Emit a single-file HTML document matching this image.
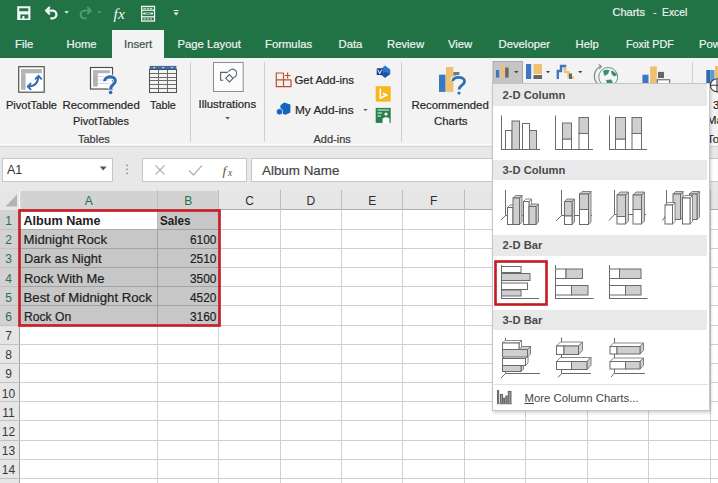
<!DOCTYPE html>
<html><head><meta charset="utf-8">
<style>
*{margin:0;padding:0;box-sizing:border-box}
html,body{width:718px;height:483px;overflow:hidden}
body{position:relative;background:#fff;font-family:"Liberation Sans",sans-serif;color:#333}
.a{position:absolute;white-space:nowrap}
.rt,.tab,.gl{-webkit-text-stroke:0.2px currentColor}
.tab{position:absolute;top:37px;font-size:11.3px;color:#eef3ef;line-height:14px}
.rt{position:absolute;font-size:11.4px;color:#262626;line-height:14px;white-space:nowrap}
.gl{position:absolute;font-size:11px;color:#3a3a3a;line-height:14px;white-space:nowrap}
.sep{position:absolute;top:62px;width:1px;height:80px;background:#cfcfcf}
</style></head><body>

<!-- title bar + tabs -->
<div class="a" style="left:0;top:0;width:718px;height:58px;background:#217346"></div>
<div class="a" style="left:112px;top:30px;width:52px;height:29px;background:#f3f3f3"></div>
<div class="a" style="left:612.5px;top:5px;font-size:11px;color:#eef3ef;line-height:14px;-webkit-text-stroke:0.2px #eef3ef">Charts</div><div class="a" style="left:653px;top:5px;font-size:11px;color:#eef3ef;line-height:14px">-</div><div class="a" style="left:662px;top:5px;font-size:11px;color:#eef3ef;line-height:14px;-webkit-text-stroke:0.2px #eef3ef;transform:scaleX(0.94);transform-origin:0 0">Excel</div>
<div class="tab" style="left:15px">File</div>
<div class="tab" style="left:66.5px">Home</div>
<div class="tab" style="left:124px;color:#3d5246">Insert</div>
<div class="tab" style="left:177.5px">Page Layout</div>
<div class="tab" style="left:265px">Formulas</div>
<div class="tab" style="left:338.5px">Data</div>
<div class="tab" style="left:387px">Review</div>
<div class="tab" style="left:448px">View</div>
<div class="tab" style="left:498.5px">Developer</div>
<div class="tab" style="left:575.5px">Help</div>
<div class="tab" style="left:625.5px;transform:scaleX(0.95);transform-origin:0 0">Foxit PDF</div>
<div class="tab" style="left:699px">Power</div>

<!-- ribbon -->
<div class="a" style="left:0;top:58px;width:718px;height:89px;background:#f3f3f3"></div>
<div class="a" style="left:0;top:143.5px;width:718px;height:1px;background:#fafafa"></div><div class="a" style="left:0;top:146px;width:718px;height:1.5px;background:#d4d4d4"></div>
<div class="a" style="left:0;top:147px;width:718px;height:44px;background:#e8e8e8"></div>
<div class="sep" style="left:190px"></div>
<div class="sep" style="left:264px"></div>
<div class="sep" style="left:401px"></div>
<div class="sep" style="left:692px;height:22px"></div>

<div class="rt" style="left:6px;top:98px;transform:scaleX(0.97);transform-origin:0 0">PivotTable</div>
<div class="rt" style="left:62.5px;top:98px">Recommended</div>
<div class="rt" style="left:73px;top:114px;transform:scaleX(0.96);transform-origin:0 0">PivotTables</div>
<div class="rt" style="left:150px;top:98px;transform:scaleX(0.95);transform-origin:0 0">Table</div>
<div class="gl" style="left:78px;top:132px">Tables</div>
<div class="rt" style="left:198.5px;top:97px">Illustrations</div>
<div class="rt" style="left:294.5px;top:73px">Get Add-ins</div>
<div class="rt" style="left:294.5px;top:103px;transform:scaleX(1.04);transform-origin:0 0">My Add-ins</div>
<div class="gl" style="left:313.5px;top:132px">Add-ins</div>
<div class="rt" style="left:411.5px;top:98px">Recommended</div>
<div class="rt" style="left:434px;top:114px">Charts</div>
<div class="rt" style="left:713px;top:98px">3</div>
<div class="rt" style="left:707px;top:113px">Map</div>
<div class="rt" style="left:707px;top:132px">Tour</div>

<!-- RIBBON -->
<svg class="a" style="left:0;top:0" width="718" height="130" viewBox="0 0 718 130">
<rect x="493" y="61.5" width="29.5" height="22" fill="#c5c5c5" stroke="#a9a9a9" stroke-width="1"/>
<g fill="#f4f8f5"><path d="M17.2 6.2 H30.4 V20 H17.2 Z M19.3 8.3 V11.3 H28.3 V8.3 Z M20.3 14.5 V18.4 H22.4 V16 H24.4 V18.4 H28.3 V14.5 Z" fill-rule="evenodd"/></g>
<g fill="none" stroke="#f4f8f5" stroke-width="2.2" stroke-linecap="round" stroke-linejoin="round"><path d="M46.2 10.6 H52.5 A3.9 3.9 0 0 1 52.5 18.4 H51.2"/><path d="M49.2 7.6 L46.2 10.6 L49.2 13.6"/></g>
<path d="M64.3 11.3 H68.9 L66.6 13.6 Z" fill="#f4f8f5"/>
<g fill="none" stroke="#5aa27a" stroke-width="1.9" stroke-linecap="round" stroke-linejoin="round" opacity="0.9"><path d="M90.8 10.6 H84.5 A3.9 3.9 0 0 0 84.5 18.4 H85.8"/><path d="M87.8 7.6 L90.8 10.6 L87.8 13.6"/></g>
<path d="M97.3 11.3 H101.9 L99.6 13.6 Z" fill="#4f9a71"/>
<text x="113.6" y="18.6" font-family="Liberation Serif" font-style="italic" font-size="15.5" fill="#f4f8f5">fx</text>
<g fill="none" stroke="#f4f8f5" stroke-width="1.3"><rect x="141.7" y="6.4" width="12.8" height="14.6"/><line x1="141.7" y1="10.2" x2="154.5" y2="10.2"/><line x1="141.7" y1="16.8" x2="154.5" y2="16.8"/></g>
<path d="M143.5 8.3 H152.8 M143.5 18.9 H152.8" stroke="#f4f8f5" stroke-width="1" stroke-dasharray="2.2 1"/>
<path d="M143.2 13.5 H153" stroke="#f4f8f5" stroke-width="1.8"/><path d="M145.5 13.5 H150.7" stroke="#217346" stroke-width="0.7"/>
<rect x="173.8" y="10" width="4.6" height="1" fill="#f4f8f5"/><path d="M173.6 12.4 H178.6 L176.1 15.4 Z" fill="#f4f8f5"/>
<rect x="18.7" y="66.7" width="25.5" height="25.5" fill="#fff" stroke="#505050" stroke-width="1.2"/>
<rect x="21" y="69" width="20.8" height="4.3" fill="#b3b3b3"/><rect x="21" y="73.3" width="4.6" height="16.5" fill="#b3b3b3"/>
<g fill="none" stroke="#2f6db5" stroke-width="1.9" stroke-linecap="round" stroke-linejoin="round"><path d="M28.2 86.5 Q37.8 86.5 38.5 76.4"/><path d="M30.6 83.6 L27.8 86.5 L30.6 89.3"/><path d="M35.6 78.8 L38.5 75.8 L41.3 78.8"/></g>
<rect x="90.5" y="67.5" width="22" height="21.5" fill="#fff" stroke="#505050" stroke-width="1.2"/>
<rect x="93" y="70.2" width="17" height="3" fill="#b3b3b3"/><rect x="93" y="73.2" width="4.8" height="13.4" fill="#b3b3b3"/>
<g stroke="#d0d0d0" stroke-width="0.8"><line x1="98" y1="76.5" x2="110" y2="76.5"/><line x1="98" y1="80" x2="110" y2="80"/><line x1="98" y1="83.5" x2="110" y2="83.5"/></g>
<path d="M104.6 81.3 C104.6 75.6 115.4 75.4 115.4 80.8 C115.4 84.6 110.6 84.4 110.6 89" fill="none" stroke="#fff" stroke-width="5"/>
<path d="M104.6 81.3 C104.6 75.6 115.4 75.4 115.4 80.8 C115.4 84.6 110.6 84.4 110.6 89" fill="none" stroke="#2f6db5" stroke-width="3.1"/>
<circle cx="110.6" cy="92.4" r="1.8" fill="#2f6db5"/>
<rect x="149.6" y="65.9" width="26.8" height="3.9" fill="#3f6fa6"/>
<g fill="#fff"><path d="M152.8 67.2 H155.6 L154.2 68.6Z"/><path d="M161.8 67.2 H164.6 L163.2 68.6Z"/><path d="M170.6 67.2 H173.4 L172 68.6Z"/></g>
<g stroke="#6a6a6a" stroke-width="1" fill="none"><line x1="158.5" y1="70" x2="158.5" y2="92.5"/><line x1="167.5" y1="70" x2="167.5" y2="92.5"/><line x1="150" y1="73.5" x2="176" y2="73.5"/><line x1="150" y1="77.5" x2="176" y2="77.5"/><line x1="150" y1="80.5" x2="176" y2="80.5"/><line x1="150" y1="84.5" x2="176" y2="84.5"/><line x1="150" y1="88.5" x2="176" y2="88.5"/></g>
<rect x="149.5" y="69.5" width="27" height="23" fill="none" stroke="#505050" stroke-width="1"/>
<rect x="213.5" y="62.5" width="29.7" height="29" fill="#fcfcfc" stroke="#8c8c8c" stroke-width="1"/>
<g fill="none" stroke="#55606b" stroke-width="1.1"><path d="M227.8 72.4 H220.6 V80.2 H223.2"/><path d="M228.5 71.8 A4.3 4.3 0 1 1 233.6 77.6"/><path d="M229.4 74.6 L233.1 78.3 L229.4 82 L225.7 78.3 Z"/></g>
<path d="M225.2 117 H230 L227.6 119.4Z" fill="#555"/>
<g fill="none" stroke="#c0502a" stroke-width="1.2"><path d="M283.5 73 H276.3 V86.6 H291 V79.8 M276.3 79.8 H291 M283.5 73 V86.6"/><path d="M287.6 72.6 V78.4 M284.7 75.5 H290.5"/></g>
<path d="M284.2 102.6 L290.4 104.6 L290.4 112.4 L285.6 114.8 L280.4 113 L280.4 105.2 Z" fill="#1565c0"/>
<circle cx="279.5" cy="111.8" r="3.2" fill="#1565c0" stroke="#f3f3f3" stroke-width="0.8"/>
<path d="M363.2 108.9 H367.6 L365.4 111.1Z" fill="#555"/>
<path d="M385 65.4 L390.3 69.5 L390.3 74 L385 77.8 L380.5 74 L380.5 69.5 Z" fill="#2f78d0"/>
<path d="M385 71.5 L390.3 74 L385 77.8 L381.5 75 Z" fill="#1d56a8"/>
<rect x="376.7" y="68.3" width="6" height="6.8" rx="0.6" fill="#1b3f86"/>
<path d="M377.8 69.7 L379.7 73.8 L381.6 69.7" fill="none" stroke="#fff" stroke-width="1"/>
<rect x="375.7" y="86.2" width="15" height="15.4" fill="#f6b71c"/>
<path d="M380.3 88.6 V98.2 L386.8 95 L383 93.4" fill="none" stroke="#fff" stroke-width="1.7" stroke-linejoin="round"/>
<rect x="375.7" y="107.9" width="15" height="15" fill="#2a8050"/>
<g stroke="#fff" stroke-width="0.9"><line x1="377.5" y1="110" x2="389" y2="110"/><line x1="377.5" y1="113" x2="382" y2="113"/><line x1="377.5" y1="116" x2="381" y2="116"/></g>
<circle cx="386" cy="114" r="1.6" fill="#fff"/><path d="M382.6 122.9 V118.6 Q386 116 389.4 118.6 V122.9Z" fill="#fff"/>
<rect x="439" y="74.7" width="6.5" height="17.2" fill="#3b78c0"/>
<rect x="446" y="67" width="7.4" height="24.9" fill="#f0c070"/>
<rect x="453.4" y="72" width="6" height="6" fill="#777"/>
<path d="M452.8 81 C452.8 76.2 464.6 76 464.6 81.5 C464.6 85 459 85.4 459 89.6" fill="none" stroke="#f3f3f3" stroke-width="5"/>
<path d="M452.8 81 C452.8 76.2 464.6 76 464.6 81.5 C464.6 85 459 85.4 459 89.6" fill="none" stroke="#2f6db5" stroke-width="2.8"/>
<circle cx="459" cy="93" r="1.6" fill="#2f6db5"/>
<rect x="496" y="70" width="3.2" height="7.6" fill="#3b78c0"/><rect x="501" y="65" width="3.4" height="12.6" fill="#f0c070"/><rect x="505.2" y="67.5" width="3.4" height="10.1" fill="#666"/>
<path d="M514 71 H518.5 L516.25 73.2Z" fill="#444"/>
<rect x="526" y="64" width="5.2" height="15" fill="#3b78c0"/><rect x="533.5" y="64" width="8.5" height="10" fill="#f0c070"/><rect x="533.5" y="75" width="8.5" height="4" fill="#666"/>
<path d="M546 71 H550 L548 73.2Z" fill="#444"/>
<path d="M557.8 79 V71 H561 V66 H565 V69.8" fill="none" stroke="#3b78c0" stroke-width="2.4"/><path d="M565 67 V72 H568.5 V77 H572.5 V79" fill="none" stroke="#f0c070" stroke-width="2.2"/><rect x="569" y="73.5" width="3" height="5.5" fill="#666"/>
<path d="M578 71 H582.4 L580.2 73.2Z" fill="#444"/>
<path d="M600.5 66.5 A10.5 10.5 0 0 0 598 84" fill="none" stroke="#888" stroke-width="1.3"/><path d="M598.8 64.5 L601.4 66.4 L599.4 68.8" fill="none" stroke="#888" stroke-width="1.1"/>
<circle cx="608.2" cy="77" r="9.5" fill="#f5f5f5" stroke="#5a9a7c" stroke-width="1"/>
<path d="M603 71 Q606 69 609.5 70.5 L608 74 L604.5 76 Z M611 70.5 Q615.5 71.5 617.2 75 L614 76.5 L611.5 74 Z M606 80 L611.5 79.5 L613 83.5 L607 84 Z" fill="#3f8f6b"/>
<rect x="642.4" y="74.7" width="6.1" height="9" fill="#3b78c0"/><rect x="650.2" y="66.4" width="6.7" height="17.3" fill="#f0c070"/><rect x="658" y="71.9" width="6" height="6.1" fill="#666"/>
<rect x="657.3" y="79.8" width="12.4" height="4" fill="#fff" stroke="#555" stroke-width="1"/>
<rect x="715" y="66" width="3" height="12" fill="#f0c070"/>
<rect x="706.3" y="70" width="4" height="13" fill="#2f6aa8"/><rect x="710.3" y="70" width="4.2" height="13" fill="#5b9bd5"/>
<circle cx="717" cy="85.3" r="6.6" fill="#fafafa" stroke="#3c3c3c" stroke-width="1.1"/>
<path d="M710.4 85.3 H718 M717 78.7 V92" stroke="#3c3c3c" stroke-width="1.1"/>
</svg>
<!-- /RIBBON -->
<!-- formula bar -->
<div class="a" style="left:2px;top:157.5px;width:110.5px;height:24px;background:#fff;border:1px solid #c6c6c6"></div>
<div class="a" style="left:7px;top:163px;font-size:12.5px;color:#333;line-height:14px">A1</div>
<div class="a" style="left:142px;top:157.5px;width:104.5px;height:24px;background:#fff;border:1px solid #c6c6c6"></div>
<svg class="a" style="left:0;top:150px" width="260" height="40" viewBox="0 150 260 40">
<path d="M99.8 166.6 H106.6 L103.2 170.4Z" fill="#555"/>
<g fill="#8a8a8a"><rect x="126.3" y="164.6" width="1.5" height="1.5"/><rect x="126.3" y="168.6" width="1.5" height="1.5"/><rect x="126.3" y="172.6" width="1.5" height="1.5"/></g>
<path d="M155.5 165.5 L164.5 174.5 M164.5 165.5 L155.5 174.5" stroke="#b5b5b5" stroke-width="1.3"/>
<path d="M189 170.5 L193.5 175 L202 165.5" fill="none" stroke="#b5b5b5" stroke-width="1.3"/>
<text x="222.5" y="175" font-family="Liberation Serif" font-style="italic" font-size="13.5" fill="#555">f</text>
<text x="228" y="176" font-family="Liberation Serif" font-style="italic" font-size="9.5" fill="#555">x</text>
</svg>
<div class="a" style="left:250.5px;top:157.5px;width:470px;height:24px;background:#fff;border:1px solid #c6c6c6"></div>
<div class="a" style="left:262px;top:162.5px;font-size:13.4px;color:#444;line-height:15px;-webkit-text-stroke:0.2px #444">Album Name</div>

<!-- SHEET -->
<div class="a" style="left:0;top:191px;width:718px;height:18.5px;background:#e6e6e6"></div>
<div class="a" style="left:20px;top:191px;width:199px;height:18.5px;background:#d2d2d2"></div>
<div class="a" style="left:0;top:209.5px;width:20px;height:273.5px;background:#e6e6e6"></div>
<div class="a" style="left:0;top:210.0px;width:20px;height:115.01999999999998px;background:#d2d2d2"></div>
<svg class="a" style="left:0;top:0" width="718" height="483" viewBox="0 0 718 483">
<path d="M17 194.5 L17 206.5 L5.5 206.5 Z" fill="#b4b4b4"/>
<line x1="157.5" y1="190" x2="157.5" y2="209.5" stroke="#bdbdbd" stroke-width="1"/>
<line x1="218.5" y1="190" x2="218.5" y2="209.5" stroke="#bdbdbd" stroke-width="1"/>
<line x1="280.5" y1="190" x2="280.5" y2="209.5" stroke="#bdbdbd" stroke-width="1"/>
<line x1="341.5" y1="190" x2="341.5" y2="209.5" stroke="#bdbdbd" stroke-width="1"/>
<line x1="402.5" y1="190" x2="402.5" y2="209.5" stroke="#bdbdbd" stroke-width="1"/>
<line x1="464.5" y1="190" x2="464.5" y2="209.5" stroke="#bdbdbd" stroke-width="1"/>
<line x1="525.5" y1="190" x2="525.5" y2="209.5" stroke="#bdbdbd" stroke-width="1"/>
<line x1="587.5" y1="190" x2="587.5" y2="209.5" stroke="#bdbdbd" stroke-width="1"/>
<line x1="648.5" y1="190" x2="648.5" y2="209.5" stroke="#bdbdbd" stroke-width="1"/>
<line x1="710.5" y1="190" x2="710.5" y2="209.5" stroke="#bdbdbd" stroke-width="1"/>
<line x1="20" y1="209.5" x2="718" y2="209.5" stroke="#ababab" stroke-width="1"/>
<line x1="19.5" y1="191" x2="19.5" y2="209.5" stroke="#f4f4f4" stroke-width="1.5"/>
<line x1="19.5" y1="209.5" x2="19.5" y2="483" stroke="#a3a3a3" stroke-width="1"/>
<line x1="157.5" y1="209.5" x2="157.5" y2="483" stroke="#d0d0d0" stroke-width="1"/>
<line x1="218.5" y1="209.5" x2="218.5" y2="483" stroke="#d0d0d0" stroke-width="1"/>
<line x1="280.5" y1="209.5" x2="280.5" y2="483" stroke="#d0d0d0" stroke-width="1"/>
<line x1="341.5" y1="209.5" x2="341.5" y2="483" stroke="#d0d0d0" stroke-width="1"/>
<line x1="402.5" y1="209.5" x2="402.5" y2="483" stroke="#d0d0d0" stroke-width="1"/>
<line x1="464.5" y1="209.5" x2="464.5" y2="483" stroke="#d0d0d0" stroke-width="1"/>
<line x1="525.5" y1="209.5" x2="525.5" y2="483" stroke="#d0d0d0" stroke-width="1"/>
<line x1="587.5" y1="209.5" x2="587.5" y2="483" stroke="#d0d0d0" stroke-width="1"/>
<line x1="648.5" y1="209.5" x2="648.5" y2="483" stroke="#d0d0d0" stroke-width="1"/>
<line x1="710.5" y1="209.5" x2="710.5" y2="483" stroke="#d0d0d0" stroke-width="1"/>
<line x1="20" y1="229.5" x2="718" y2="229.5" stroke="#d0d0d0" stroke-width="1"/>
<line x1="0" y1="229.5" x2="20" y2="229.5" stroke="#c2c2c2" stroke-width="1"/>
<line x1="20" y1="248.5" x2="718" y2="248.5" stroke="#d0d0d0" stroke-width="1"/>
<line x1="0" y1="248.5" x2="20" y2="248.5" stroke="#c2c2c2" stroke-width="1"/>
<line x1="20" y1="267.5" x2="718" y2="267.5" stroke="#d0d0d0" stroke-width="1"/>
<line x1="0" y1="267.5" x2="20" y2="267.5" stroke="#c2c2c2" stroke-width="1"/>
<line x1="20" y1="286.5" x2="718" y2="286.5" stroke="#d0d0d0" stroke-width="1"/>
<line x1="0" y1="286.5" x2="20" y2="286.5" stroke="#c2c2c2" stroke-width="1"/>
<line x1="20" y1="305.5" x2="718" y2="305.5" stroke="#d0d0d0" stroke-width="1"/>
<line x1="0" y1="305.5" x2="20" y2="305.5" stroke="#c2c2c2" stroke-width="1"/>
<line x1="20" y1="325.5" x2="718" y2="325.5" stroke="#d0d0d0" stroke-width="1"/>
<line x1="0" y1="325.5" x2="20" y2="325.5" stroke="#c2c2c2" stroke-width="1"/>
<line x1="20" y1="344.5" x2="718" y2="344.5" stroke="#d0d0d0" stroke-width="1"/>
<line x1="0" y1="344.5" x2="20" y2="344.5" stroke="#c2c2c2" stroke-width="1"/>
<line x1="20" y1="363.5" x2="718" y2="363.5" stroke="#d0d0d0" stroke-width="1"/>
<line x1="0" y1="363.5" x2="20" y2="363.5" stroke="#c2c2c2" stroke-width="1"/>
<line x1="20" y1="382.5" x2="718" y2="382.5" stroke="#d0d0d0" stroke-width="1"/>
<line x1="0" y1="382.5" x2="20" y2="382.5" stroke="#c2c2c2" stroke-width="1"/>
<line x1="20" y1="401.5" x2="718" y2="401.5" stroke="#d0d0d0" stroke-width="1"/>
<line x1="0" y1="401.5" x2="20" y2="401.5" stroke="#c2c2c2" stroke-width="1"/>
<line x1="20" y1="420.5" x2="718" y2="420.5" stroke="#d0d0d0" stroke-width="1"/>
<line x1="0" y1="420.5" x2="20" y2="420.5" stroke="#c2c2c2" stroke-width="1"/>
<line x1="20" y1="440.5" x2="718" y2="440.5" stroke="#d0d0d0" stroke-width="1"/>
<line x1="0" y1="440.5" x2="20" y2="440.5" stroke="#c2c2c2" stroke-width="1"/>
<line x1="20" y1="459.5" x2="718" y2="459.5" stroke="#d0d0d0" stroke-width="1"/>
<line x1="0" y1="459.5" x2="20" y2="459.5" stroke="#c2c2c2" stroke-width="1"/>
<line x1="20" y1="478.5" x2="718" y2="478.5" stroke="#d0d0d0" stroke-width="1"/>
<line x1="0" y1="478.5" x2="20" y2="478.5" stroke="#c2c2c2" stroke-width="1"/>
<path d="M20 229.17000000000002 H157.5 V210.0 H219 V325.02 H20 Z" fill="#000" fill-opacity="0.22"/>
<rect x="19.5" y="210.5" width="200" height="115" fill="none" stroke="#c8202a" stroke-width="2.7"/>
</svg>
<div class="a" style="left:68.75px;width:40px;text-align:center;top:193.5px;font-size:12px;line-height:15px;color:#217346">A</div>
<div class="a" style="left:168.25px;width:40px;text-align:center;top:193.5px;font-size:12px;line-height:15px;color:#217346">B</div>
<div class="a" style="left:229.7px;width:40px;text-align:center;top:193.5px;font-size:12px;line-height:15px;color:#2e2e2e">C</div>
<div class="a" style="left:290.95px;width:40px;text-align:center;top:193.5px;font-size:12px;line-height:15px;color:#2e2e2e">D</div>
<div class="a" style="left:352.15px;width:40px;text-align:center;top:193.5px;font-size:12px;line-height:15px;color:#2e2e2e">E</div>
<div class="a" style="left:413.6px;width:40px;text-align:center;top:193.5px;font-size:12px;line-height:15px;color:#2e2e2e">F</div>
<div class="a" style="left:-1.5px;width:20px;text-align:center;top:214.0px;font-size:12px;line-height:15px;color:#2a7049">1</div>
<div class="a" style="left:-1.5px;width:20px;text-align:center;top:233.17000000000002px;font-size:12px;line-height:15px;color:#2a7049">2</div>
<div class="a" style="left:-1.5px;width:20px;text-align:center;top:252.34px;font-size:12px;line-height:15px;color:#2a7049">3</div>
<div class="a" style="left:-1.5px;width:20px;text-align:center;top:271.51px;font-size:12px;line-height:15px;color:#2a7049">4</div>
<div class="a" style="left:-1.5px;width:20px;text-align:center;top:290.68px;font-size:12px;line-height:15px;color:#2a7049">5</div>
<div class="a" style="left:-1.5px;width:20px;text-align:center;top:309.85px;font-size:12px;line-height:15px;color:#2a7049">6</div>
<div class="a" style="left:-1.5px;width:20px;text-align:center;top:329.02px;font-size:12px;line-height:15px;color:#383838">7</div>
<div class="a" style="left:-1.5px;width:20px;text-align:center;top:348.19px;font-size:12px;line-height:15px;color:#383838">8</div>
<div class="a" style="left:-1.5px;width:20px;text-align:center;top:367.36px;font-size:12px;line-height:15px;color:#383838">9</div>
<div class="a" style="left:-1.5px;width:20px;text-align:center;top:386.53000000000003px;font-size:12px;line-height:15px;color:#383838">10</div>
<div class="a" style="left:-1.5px;width:20px;text-align:center;top:405.70000000000005px;font-size:12px;line-height:15px;color:#383838">11</div>
<div class="a" style="left:-1.5px;width:20px;text-align:center;top:424.87px;font-size:12px;line-height:15px;color:#383838">12</div>
<div class="a" style="left:-1.5px;width:20px;text-align:center;top:444.04px;font-size:12px;line-height:15px;color:#383838">13</div>
<div class="a" style="left:-1.5px;width:20px;text-align:center;top:463.21000000000004px;font-size:12px;line-height:15px;color:#383838">14</div>
<div class="a" style="left:23.5px;top:213.0px;font-size:12.6px;font-weight:bold;line-height:16px;color:#1e1e1e;-webkit-text-stroke:0px #1e1e1e;transform:scaleX(1.0);transform-origin:0 0">Album Name</div>
<div class="a" style="left:159.5px;top:213.0px;font-size:12.6px;font-weight:bold;line-height:16px;color:#1e1e1e;-webkit-text-stroke:0px #1e1e1e;transform:scaleX(0.93);transform-origin:0 0">Sales</div>
<div class="a" style="left:23.5px;top:232.17000000000002px;font-size:13.2px;font-weight:normal;line-height:16px;color:#1e1e1e;-webkit-text-stroke:0.2px #1e1e1e;transform:scaleX(1.0);transform-origin:0 0">Midnight Rock</div>
<div class="a" style="right:501.5px;top:232.17000000000002px;font-size:13.2px;font-weight:normal;line-height:16px;color:#1e1e1e;-webkit-text-stroke:0.2px #1e1e1e;transform:scaleX(0.9);transform-origin:100% 0">6100</div>
<div class="a" style="left:23.5px;top:251.34px;font-size:13.2px;font-weight:normal;line-height:16px;color:#1e1e1e;-webkit-text-stroke:0.2px #1e1e1e;transform:scaleX(0.97);transform-origin:0 0">Dark as Night</div>
<div class="a" style="right:501.5px;top:251.34px;font-size:13.2px;font-weight:normal;line-height:16px;color:#1e1e1e;-webkit-text-stroke:0.2px #1e1e1e;transform:scaleX(0.9);transform-origin:100% 0">2510</div>
<div class="a" style="left:23.5px;top:270.51px;font-size:13.2px;font-weight:normal;line-height:16px;color:#1e1e1e;-webkit-text-stroke:0.2px #1e1e1e;transform:scaleX(0.98);transform-origin:0 0">Rock With Me</div>
<div class="a" style="right:501.5px;top:270.51px;font-size:13.2px;font-weight:normal;line-height:16px;color:#1e1e1e;-webkit-text-stroke:0.2px #1e1e1e;transform:scaleX(0.9);transform-origin:100% 0">3500</div>
<div class="a" style="left:23.5px;top:289.68px;font-size:13.2px;font-weight:normal;line-height:16px;color:#1e1e1e;-webkit-text-stroke:0.2px #1e1e1e;transform:scaleX(1.0);transform-origin:0 0">Best of Midnight Rock</div>
<div class="a" style="right:501.5px;top:289.68px;font-size:13.2px;font-weight:normal;line-height:16px;color:#1e1e1e;-webkit-text-stroke:0.2px #1e1e1e;transform:scaleX(0.9);transform-origin:100% 0">4520</div>
<div class="a" style="left:23.5px;top:308.85px;font-size:13.2px;font-weight:normal;line-height:16px;color:#1e1e1e;-webkit-text-stroke:0.2px #1e1e1e;transform:scaleX(0.92);transform-origin:0 0">Rock On</div>
<div class="a" style="right:501.5px;top:308.85px;font-size:13.2px;font-weight:normal;line-height:16px;color:#1e1e1e;-webkit-text-stroke:0.2px #1e1e1e;transform:scaleX(0.9);transform-origin:100% 0">3160</div>
<!-- /SHEET -->

<!-- PANEL -->
<div class="a" style="left:492px;top:83px;width:218px;height:328px;background:#fff;border:1px solid #c6c6c6;box-shadow:1px 2px 3px rgba(0,0,0,0.18)"></div>
<div class="a" style="left:493px;top:84px;width:214px;height:21.5px;background:#e9e9e9"></div>
<div class="a" style="left:502.5px;top:88.0px;font-size:11.2px;font-weight:bold;color:#4a4a4a;line-height:15px">2-D Column</div>
<div class="a" style="left:493px;top:159.5px;width:214px;height:20.5px;background:#e9e9e9"></div>
<div class="a" style="left:502.5px;top:163.0px;font-size:11.2px;font-weight:bold;color:#4a4a4a;line-height:15px">3-D Column</div>
<div class="a" style="left:493px;top:234.5px;width:214px;height:21.0px;background:#e9e9e9"></div>
<div class="a" style="left:502.5px;top:238.25px;font-size:11.2px;font-weight:bold;color:#4a4a4a;line-height:15px">2-D Bar</div>
<div class="a" style="left:493px;top:310px;width:214px;height:20px;background:#e9e9e9"></div>
<div class="a" style="left:502.5px;top:313.25px;font-size:11.2px;font-weight:bold;color:#4a4a4a;line-height:15px">3-D Bar</div>
<div class="a" style="left:494px;top:384px;width:214px;height:1px;background:#e1e1e1"></div>
<div class="a" style="left:524.5px;top:391px;font-size:11.35px;color:#444;line-height:15px"><span style="text-decoration:underline">M</span>ore Column Charts...</div>
<svg class="a" style="left:0;top:0" width="718" height="483" viewBox="0 0 718 483">
<rect x="505.5" y="130.5" width="6.5" height="19.0" fill="#ffffff" stroke="#6b6b6b" stroke-width="1"/>
<rect x="512" y="121" width="7.5" height="28.5" fill="#cfcfcf" stroke="#6b6b6b" stroke-width="1"/>
<rect x="522.5" y="123.5" width="7.0" height="26.0" fill="#ffffff" stroke="#6b6b6b" stroke-width="1"/>
<rect x="529.5" y="130.5" width="7.0" height="19.0" fill="#cfcfcf" stroke="#6b6b6b" stroke-width="1"/>
<line x1="501.5" y1="115.5" x2="501.5" y2="150" stroke="#6b6b6b" stroke-width="1"/>
<line x1="501.5" y1="149.5" x2="540" y2="149.5" stroke="#6b6b6b" stroke-width="1"/>
<rect x="562.5" y="139" width="9.0" height="10.5" fill="#ffffff" stroke="#6b6b6b" stroke-width="1"/>
<rect x="562.5" y="123" width="9.0" height="16" fill="#cfcfcf" stroke="#6b6b6b" stroke-width="1"/>
<rect x="579" y="133.5" width="9.5" height="16.0" fill="#ffffff" stroke="#6b6b6b" stroke-width="1"/>
<rect x="579" y="117.5" width="9.5" height="16.0" fill="#cfcfcf" stroke="#6b6b6b" stroke-width="1"/>
<line x1="555.5" y1="115.5" x2="555.5" y2="150" stroke="#6b6b6b" stroke-width="1"/>
<line x1="555.5" y1="149.5" x2="593" y2="149.5" stroke="#6b6b6b" stroke-width="1"/>
<rect x="615.5" y="139" width="10.0" height="10.5" fill="#ffffff" stroke="#6b6b6b" stroke-width="1"/>
<rect x="615.5" y="117.5" width="10.0" height="21.5" fill="#cfcfcf" stroke="#6b6b6b" stroke-width="1"/>
<rect x="632" y="133.5" width="9.5" height="16.0" fill="#ffffff" stroke="#6b6b6b" stroke-width="1"/>
<rect x="632" y="117.5" width="9.5" height="16.0" fill="#cfcfcf" stroke="#6b6b6b" stroke-width="1"/>
<line x1="609.5" y1="115.5" x2="609.5" y2="150" stroke="#6b6b6b" stroke-width="1"/>
<line x1="609.5" y1="149.5" x2="647" y2="149.5" stroke="#6b6b6b" stroke-width="1"/>
<line x1="505.5" y1="190" x2="505.5" y2="215.5" stroke="#6b6b6b" stroke-width="1"/><line x1="505.5" y1="215.5" x2="501" y2="220" stroke="#6b6b6b" stroke-width="1"/><line x1="505.5" y1="215.5" x2="538" y2="215.5" stroke="#6b6b6b" stroke-width="1"/>
<path d="M513 207.5 L515.5 205.0 L515.5 222.0 L513 224.5 Z" fill="#ffffff" stroke="#6b6b6b" stroke-width="0.8"/><path d="M507.5 207.5 L510.0 205.0 L515.5 205.0 L513 207.5 Z" fill="#ffffff" stroke="#6b6b6b" stroke-width="0.8"/><rect x="507.5" y="207.5" width="5.5" height="17.0" fill="#ffffff" stroke="#6b6b6b" stroke-width="1"/>
<path d="M519.5 198 L522.0 195.5 L522.0 222.0 L519.5 224.5 Z" fill="#cfcfcf" stroke="#6b6b6b" stroke-width="0.8"/><path d="M513 198 L515.5 195.5 L522.0 195.5 L519.5 198 Z" fill="#cfcfcf" stroke="#6b6b6b" stroke-width="0.8"/><rect x="513" y="198" width="6.5" height="26.5" fill="#cfcfcf" stroke="#6b6b6b" stroke-width="1"/>
<path d="M529 201.5 L531.5 199.0 L531.5 222.0 L529 224.5 Z" fill="#ffffff" stroke="#6b6b6b" stroke-width="0.8"/><path d="M523.5 201.5 L526.0 199.0 L531.5 199.0 L529 201.5 Z" fill="#ffffff" stroke="#6b6b6b" stroke-width="0.8"/><rect x="523.5" y="201.5" width="5.5" height="23.0" fill="#ffffff" stroke="#6b6b6b" stroke-width="1"/>
<path d="M536 206.5 L538.5 204.0 L538.5 222.0 L536 224.5 Z" fill="#cfcfcf" stroke="#6b6b6b" stroke-width="0.8"/><path d="M529 206.5 L531.5 204.0 L538.5 204.0 L536 206.5 Z" fill="#cfcfcf" stroke="#6b6b6b" stroke-width="0.8"/><rect x="529" y="206.5" width="7" height="18.0" fill="#cfcfcf" stroke="#6b6b6b" stroke-width="1"/>
<line x1="561.5" y1="190" x2="561.5" y2="215.5" stroke="#6b6b6b" stroke-width="1"/><line x1="561.5" y1="215.5" x2="556" y2="221" stroke="#6b6b6b" stroke-width="1"/><line x1="561.5" y1="215.5" x2="592" y2="215.5" stroke="#6b6b6b" stroke-width="1"/>
<path d="M572 201.5 L574.5 199.0 L574.5 222.0 L572 224.5 Z" fill="#cfcfcf" stroke="#6b6b6b" stroke-width="0.8"/><path d="M564.5 201.5 L567.0 199.0 L574.5 199.0 L572 201.5 Z" fill="#cfcfcf" stroke="#6b6b6b" stroke-width="0.8"/><rect x="564.5" y="201.5" width="7.5" height="14.5" fill="#cfcfcf" stroke="#6b6b6b" stroke-width="1"/><rect x="564.5" y="216" width="7.5" height="8.5" fill="#ffffff" stroke="#6b6b6b" stroke-width="1"/>
<path d="M588.5 194 L591.0 191.5 L591.0 222.0 L588.5 224.5 Z" fill="#cfcfcf" stroke="#6b6b6b" stroke-width="0.8"/><path d="M579.5 194 L582.0 191.5 L591.0 191.5 L588.5 194 Z" fill="#cfcfcf" stroke="#6b6b6b" stroke-width="0.8"/><rect x="579.5" y="194" width="9.0" height="15.5" fill="#cfcfcf" stroke="#6b6b6b" stroke-width="1"/><rect x="579.5" y="209.5" width="9.0" height="15.0" fill="#ffffff" stroke="#6b6b6b" stroke-width="1"/>
<line x1="614.5" y1="190" x2="614.5" y2="214.5" stroke="#6b6b6b" stroke-width="1"/><line x1="614.5" y1="214.5" x2="609" y2="220.5" stroke="#6b6b6b" stroke-width="1"/><line x1="614.5" y1="214.5" x2="646" y2="214.5" stroke="#6b6b6b" stroke-width="1"/>
<path d="M625.5 195 L628.5 192 L628.5 221 L625.5 224 Z" fill="#cfcfcf" stroke="#6b6b6b" stroke-width="0.8"/><path d="M617 195 L620 192 L628.5 192 L625.5 195 Z" fill="#cfcfcf" stroke="#6b6b6b" stroke-width="0.8"/><rect x="617" y="195" width="8.5" height="21.5" fill="#cfcfcf" stroke="#6b6b6b" stroke-width="1"/><rect x="617" y="216.5" width="8.5" height="7.5" fill="#ffffff" stroke="#6b6b6b" stroke-width="1"/>
<path d="M641.5 195 L644.5 192 L644.5 221 L641.5 224 Z" fill="#cfcfcf" stroke="#6b6b6b" stroke-width="0.8"/><path d="M633 195 L636 192 L644.5 192 L641.5 195 Z" fill="#cfcfcf" stroke="#6b6b6b" stroke-width="0.8"/><rect x="633" y="195" width="8.5" height="14.5" fill="#cfcfcf" stroke="#6b6b6b" stroke-width="1"/><rect x="633" y="209.5" width="8.5" height="14.5" fill="#ffffff" stroke="#6b6b6b" stroke-width="1"/>
<line x1="666.5" y1="190" x2="666.5" y2="214.5" stroke="#6b6b6b" stroke-width="1"/><line x1="666.5" y1="214.5" x2="662.5" y2="220.5" stroke="#6b6b6b" stroke-width="1"/><line x1="666.5" y1="214.5" x2="700" y2="214.5" stroke="#6b6b6b" stroke-width="1"/>
<path d="M680.5 194 L683.0 191.5 L683.0 217.0 L680.5 219.5 Z" fill="#cfcfcf" stroke="#6b6b6b" stroke-width="0.8"/><path d="M673 194 L675.5 191.5 L683.0 191.5 L680.5 194 Z" fill="#cfcfcf" stroke="#6b6b6b" stroke-width="0.8"/><rect x="673" y="194" width="7.5" height="25.5" fill="#cfcfcf" stroke="#6b6b6b" stroke-width="1"/>
<path d="M697 194 L699.5 191.5 L699.5 217.0 L697 219.5 Z" fill="#cfcfcf" stroke="#6b6b6b" stroke-width="0.8"/><path d="M689.5 194 L692.0 191.5 L699.5 191.5 L697 194 Z" fill="#cfcfcf" stroke="#6b6b6b" stroke-width="0.8"/><rect x="689.5" y="194" width="7.5" height="25.5" fill="#cfcfcf" stroke="#6b6b6b" stroke-width="1"/>
<path d="M672.5 205 L675.0 202.5 L675.0 221.5 L672.5 224 Z" fill="#ffffff" stroke="#6b6b6b" stroke-width="0.8"/><path d="M665 205 L667.5 202.5 L675.0 202.5 L672.5 205 Z" fill="#ffffff" stroke="#6b6b6b" stroke-width="0.8"/><rect x="665" y="205" width="7.5" height="19" fill="#ffffff" stroke="#6b6b6b" stroke-width="1"/>
<path d="M690 198 L692.5 195.5 L692.5 221.5 L690 224 Z" fill="#ffffff" stroke="#6b6b6b" stroke-width="0.8"/><path d="M682.5 198 L685.0 195.5 L692.5 195.5 L690 198 Z" fill="#ffffff" stroke="#6b6b6b" stroke-width="0.8"/><rect x="682.5" y="198" width="7.5" height="26" fill="#ffffff" stroke="#6b6b6b" stroke-width="1"/>
<rect x="501.5" y="266.5" width="19.5" height="6.0" fill="#ffffff" stroke="#6b6b6b" stroke-width="1"/>
<rect x="501.5" y="273.5" width="28.5" height="7.0" fill="#cfcfcf" stroke="#6b6b6b" stroke-width="1"/>
<rect x="501.5" y="283" width="26.0" height="6.5" fill="#ffffff" stroke="#6b6b6b" stroke-width="1"/>
<rect x="501.5" y="290" width="19.5" height="6" fill="#cfcfcf" stroke="#6b6b6b" stroke-width="1"/>
<line x1="501.5" y1="265" x2="501.5" y2="299" stroke="#6b6b6b" stroke-width="1"/>
<line x1="501.5" y1="298.5" x2="539" y2="298.5" stroke="#6b6b6b" stroke-width="1"/>
<rect x="555.5" y="269" width="10.5" height="9.5" fill="#ffffff" stroke="#6b6b6b" stroke-width="1"/>
<rect x="566" y="269" width="16.5" height="9.5" fill="#cfcfcf" stroke="#6b6b6b" stroke-width="1"/>
<rect x="555.5" y="285.5" width="16.0" height="9.5" fill="#ffffff" stroke="#6b6b6b" stroke-width="1"/>
<rect x="571.5" y="285.5" width="16.5" height="9.5" fill="#cfcfcf" stroke="#6b6b6b" stroke-width="1"/>
<line x1="555.5" y1="265" x2="555.5" y2="299" stroke="#6b6b6b" stroke-width="1"/>
<line x1="555.5" y1="298.5" x2="593.5" y2="298.5" stroke="#6b6b6b" stroke-width="1"/>
<rect x="609.5" y="269" width="10.0" height="9.5" fill="#ffffff" stroke="#6b6b6b" stroke-width="1"/>
<rect x="619.5" y="269" width="21.5" height="9.5" fill="#cfcfcf" stroke="#6b6b6b" stroke-width="1"/>
<rect x="609.5" y="285.5" width="16.0" height="9.5" fill="#ffffff" stroke="#6b6b6b" stroke-width="1"/>
<rect x="625.5" y="285.5" width="15.5" height="9.5" fill="#cfcfcf" stroke="#6b6b6b" stroke-width="1"/>
<line x1="609.5" y1="265" x2="609.5" y2="299" stroke="#6b6b6b" stroke-width="1"/>
<line x1="609.5" y1="298.5" x2="647.5" y2="298.5" stroke="#6b6b6b" stroke-width="1"/>
<rect x="495.5" y="261.5" width="51" height="43" fill="none" stroke="#c51a24" stroke-width="2.6"/>
<line x1="505.5" y1="338" x2="505.5" y2="373" stroke="#6b6b6b" stroke-width="1"/>
<line x1="505.5" y1="373.5" x2="501" y2="378" stroke="#6b6b6b" stroke-width="1"/>
<line x1="505.5" y1="373.5" x2="540" y2="373.5" stroke="#6b6b6b" stroke-width="1"/>
<path d="M502.5 365.5 L505.0 363.0 L523.5 363.0 L521 365.5 Z" fill="#cfcfcf" stroke="#6b6b6b" stroke-width="0.8"/><path d="M521 365.5 L523.5 363.0 L523.5 369.0 L521 371.5 Z" fill="#cfcfcf" stroke="#6b6b6b" stroke-width="0.8"/><rect x="502.5" y="365.5" width="18.5" height="6.0" fill="#cfcfcf" stroke="#6b6b6b" stroke-width="1"/>
<path d="M502.5 358.5 L505.0 356.0 L528.0 356.0 L525.5 358.5 Z" fill="#ffffff" stroke="#6b6b6b" stroke-width="0.8"/><path d="M525.5 358.5 L528.0 356.0 L528.0 363.0 L525.5 365.5 Z" fill="#ffffff" stroke="#6b6b6b" stroke-width="0.8"/><rect x="502.5" y="358.5" width="23.0" height="7.0" fill="#ffffff" stroke="#6b6b6b" stroke-width="1"/>
<path d="M502.5 349.5 L505.5 346.5 L530.5 346.5 L527.5 349.5 Z" fill="#cfcfcf" stroke="#6b6b6b" stroke-width="0.8"/><path d="M527.5 349.5 L530.5 346.5 L530.5 354 L527.5 357 Z" fill="#cfcfcf" stroke="#6b6b6b" stroke-width="0.8"/><rect x="502.5" y="349.5" width="25.0" height="7.5" fill="#cfcfcf" stroke="#6b6b6b" stroke-width="1"/>
<path d="M502.5 343 L505.0 340.5 L521.5 340.5 L519 343 Z" fill="#ffffff" stroke="#6b6b6b" stroke-width="0.8"/><path d="M519 343 L521.5 340.5 L521.5 347.0 L519 349.5 Z" fill="#ffffff" stroke="#6b6b6b" stroke-width="0.8"/><rect x="502.5" y="343" width="16.5" height="6.5" fill="#ffffff" stroke="#6b6b6b" stroke-width="1"/>
<line x1="561.5" y1="337.5" x2="561.5" y2="373.5" stroke="#6b6b6b" stroke-width="1"/>
<line x1="561.5" y1="373.5" x2="558" y2="377.5" stroke="#6b6b6b" stroke-width="1"/>
<line x1="561.5" y1="373.5" x2="591" y2="373.5" stroke="#6b6b6b" stroke-width="1"/>
<path d="M556.5 346 L560.5 342 L582.5 342 L578.5 346 Z" fill="#ffffff" stroke="#6b6b6b" stroke-width="0.8"/><path d="M578.5 346 L582.5 342 L582.5 350.5 L578.5 354.5 Z" fill="#cfcfcf" stroke="#6b6b6b" stroke-width="0.8"/><rect x="556.5" y="346" width="7.5" height="8.5" fill="#ffffff" stroke="#6b6b6b" stroke-width="1"/><rect x="564" y="346" width="14.5" height="8.5" fill="#cfcfcf" stroke="#6b6b6b" stroke-width="1"/>
<path d="M556.5 361.5 L560.5 357.5 L591 357.5 L587 361.5 Z" fill="#ffffff" stroke="#6b6b6b" stroke-width="0.8"/><path d="M587 361.5 L591 357.5 L591 365.5 L587 369.5 Z" fill="#cfcfcf" stroke="#6b6b6b" stroke-width="0.8"/><rect x="556.5" y="361.5" width="15.0" height="8.0" fill="#ffffff" stroke="#6b6b6b" stroke-width="1"/><rect x="571.5" y="361.5" width="15.5" height="8.0" fill="#cfcfcf" stroke="#6b6b6b" stroke-width="1"/>
<line x1="614.5" y1="338" x2="614.5" y2="373" stroke="#6b6b6b" stroke-width="1"/>
<line x1="614.5" y1="373" x2="611" y2="377" stroke="#6b6b6b" stroke-width="1"/>
<line x1="614.5" y1="373.5" x2="645" y2="373.5" stroke="#6b6b6b" stroke-width="1"/>
<path d="M610 346.5 L613.5 343.0 L643.5 343.0 L640 346.5 Z" fill="#ffffff" stroke="#6b6b6b" stroke-width="0.8"/><path d="M640 346.5 L643.5 343.0 L643.5 350.5 L640 354 Z" fill="#cfcfcf" stroke="#6b6b6b" stroke-width="0.8"/><rect x="610" y="346.5" width="7" height="7.5" fill="#ffffff" stroke="#6b6b6b" stroke-width="1"/><rect x="617" y="346.5" width="23" height="7.5" fill="#cfcfcf" stroke="#6b6b6b" stroke-width="1"/>
<path d="M610 361.5 L613.5 358.0 L643.5 358.0 L640 361.5 Z" fill="#ffffff" stroke="#6b6b6b" stroke-width="0.8"/><path d="M640 361.5 L643.5 358.0 L643.5 365.5 L640 369 Z" fill="#cfcfcf" stroke="#6b6b6b" stroke-width="0.8"/><rect x="610" y="361.5" width="15.5" height="7.5" fill="#ffffff" stroke="#6b6b6b" stroke-width="1"/><rect x="625.5" y="361.5" width="14.5" height="7.5" fill="#cfcfcf" stroke="#6b6b6b" stroke-width="1"/>
<g fill="#9a9a9a" stroke="#5a5a5a" stroke-width="0.9"><rect x="497.6" y="390.4" width="1.1" height="13.2"/><rect x="500.4" y="394.4" width="2.2" height="9.2"/><rect x="502.8" y="398.2" width="1.8" height="5.4"/><rect x="505.8" y="396" width="1.4" height="7.6"/><rect x="508.3" y="391.4" width="2.7" height="12.2"/></g>
<path d="M497.5 403.8 H512" stroke="#8a8a8a" stroke-width="0.9"/>
</svg>
<!-- /PANEL -->
</body></html>
